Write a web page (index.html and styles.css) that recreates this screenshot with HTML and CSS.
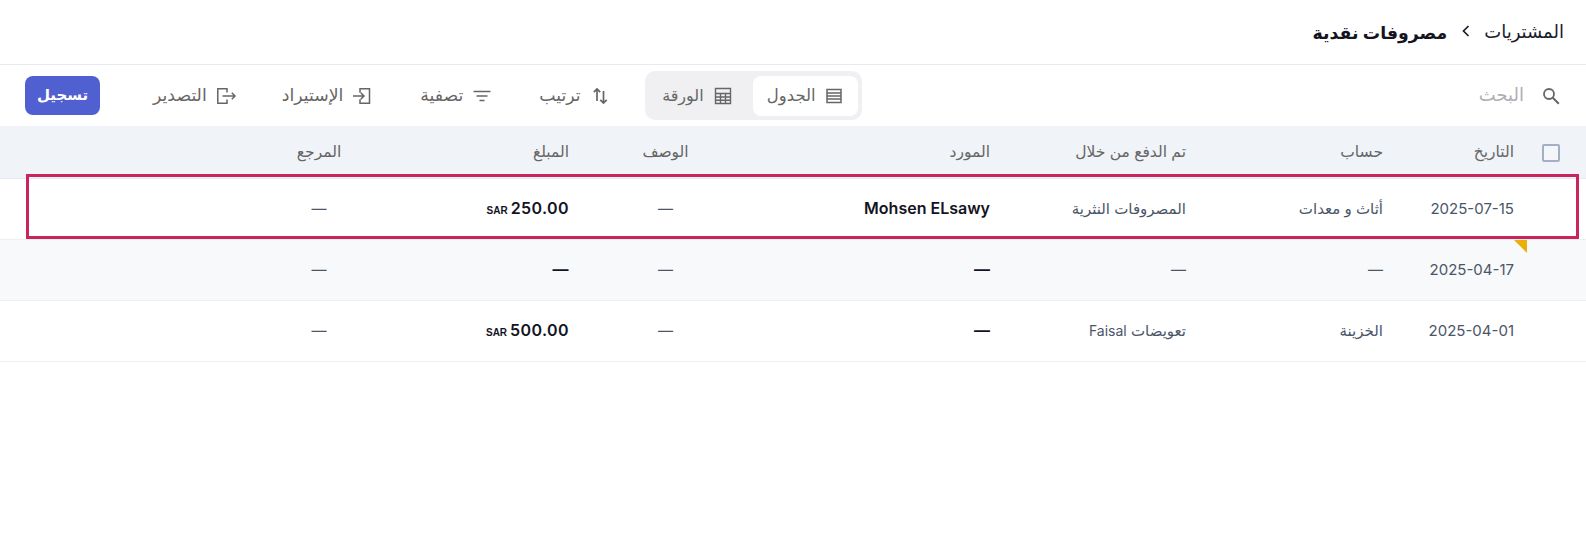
FILE: index.html
```html
<!DOCTYPE html>
<html lang="ar" dir="rtl">
<head>
<meta charset="utf-8">
<title>مصروفات نقدية</title>
<link rel="stylesheet" href="styles.css">
</head>
<body>
<header class="topbar">
  <span class="crumb">المشتريات</span>
  <svg class="chev" width="8" height="12" viewBox="0 0 8 12"><path d="M6.500 1 1.500 6l5 5" fill="none" stroke="#1b1b2b" stroke-width="1.700"/></svg>
  <h1 class="title">مصروفات نقدية</h1>
</header>
<section class="toolbar">
  <div class="search">
    <svg class="search-ic" width="18" height="18" viewBox="0 0 18 18"><circle cx="7" cy="7" r="5" fill="none" stroke="#666" stroke-width="1.800"/><path d="m10.800 10.800 6 6" stroke="#666" stroke-width="2" fill="none"/></svg>
    <span class="search-text">البحث</span>
  </div>
  <div class="actions">
    <div class="toggle">
      <button class="tab active">
        <svg width="20" height="20" viewBox="0 0 20 20"><path d="M3 3.500h14v13H3zM3 7h14M3 10h14M3 13h14" fill="none" stroke="#666" stroke-width="1.500"/></svg>
        <span>الجدول</span>
      </button>
      <button class="tab other">
        <svg width="20" height="20" viewBox="0 0 20 20"><path d="M2.500 2.500h15v15h-15zM2.500 7.500h15M2.500 11h15M2.500 14.300h15M7.500 7.500v10M12.500 7.500v10" fill="none" stroke="#666" stroke-width="1.400"/></svg>
        <span>الورقة</span>
      </button>
    </div>
    <button class="tool sort">
      <svg width="20" height="20" viewBox="0 0 20 20"><path d="M7 15V3M3.800 6.200 7 3l3.200 3.200M13.500 5v12M10.300 13.800l3.200 3.200 3.200-3.200" fill="none" stroke="#666" stroke-width="1.700"/></svg>
      <span>ترتيب</span>
    </button>
    <button class="tool filter">
      <svg width="20" height="20" viewBox="0 0 20 20"><path d="M1.500 5.500h17M4.500 10h11M7.500 14.500h5" fill="none" stroke="#666" stroke-width="1.600"/></svg>
      <span>تصفية</span>
    </button>
    <button class="tool import">
      <svg width="20" height="20" viewBox="0 0 20 20"><path d="M8 6.800v-4h9.500v14.400H8v-4M1 10h11M8.800 6.800 12 10l-3.200 3.200" fill="none" stroke="#666" stroke-width="1.500"/></svg>
      <span>الإستيراد</span>
    </button>
    <button class="tool export">
      <svg width="20" height="20" viewBox="0 0 20 20"><path d="M11 6.500V2.800H1.800v14.400H11v-3.700M6.500 10H19M15.800 6.800 19 10l-3.200 3.200" fill="none" stroke="#666" stroke-width="1.500"/></svg>
      <span>التصدير</span>
    </button>
    <button class="submit">تسجيل</button>
  </div>
</section>
<main class="table">
  <div class="row head">
    <div class="cell check"><span class="box"></span></div>
    <div class="cell">التاريخ</div>
    <div class="cell">حساب</div>
    <div class="cell">تم الدفع من خلال</div>
    <div class="cell">المورد</div>
    <div class="cell center">الوصف</div>
    <div class="cell">المبلغ</div>
    <div class="cell center">المرجع</div>
  </div>
  <div class="row">
    <div class="cell check"></div>
    <div class="cell">2025-07-15</div>
    <div class="cell">أثاث و معدات</div>
    <div class="cell">المصروفات النثرية</div>
    <div class="cell strong">Mohsen ELsawy</div>
    <div class="cell center">—</div>
    <div class="cell amount"><span dir="ltr"><small>SAR</small>250.00</span></div>
    <div class="cell center">—</div>
  </div>
  <div class="row alt">
    <div class="cell check flag"></div>
    <div class="cell">2025-04-17</div>
    <div class="cell">—</div>
    <div class="cell">—</div>
    <div class="cell strong">—</div>
    <div class="cell center">—</div>
    <div class="cell amount">—</div>
    <div class="cell center">—</div>
  </div>
  <div class="row">
    <div class="cell check"></div>
    <div class="cell">2025-04-01</div>
    <div class="cell">الخزينة</div>
    <div class="cell">تعويضات <span class="latin">Faisal</span></div>
    <div class="cell strong">—</div>
    <div class="cell center">—</div>
    <div class="cell amount"><span dir="ltr"><small>SAR</small>500.00</span></div>
    <div class="cell center">—</div>
  </div>
  <div class="highlight"></div>
</main>
</body>
</html>
```
FILE: styles.css
```css
* { box-sizing: border-box; }
html, body { margin: 0; padding: 0; }
body {
  background: #fff;
  font-family: Inter, "Noto Sans", "DejaVu Sans", sans-serif;
  font-size: 15px;
  color: #4a5568;
  height: 548px;
  overflow: hidden;
}
button { font: inherit; border: 0; background: none; padding: 0; color: inherit; }

.topbar {
  height: 65px;
  border-bottom: 1px solid #e6e9f0;
  display: flex;
  align-items: center;
  padding: 0 22px 2px 0;
}
.crumb { font-size: 18px; color: #1b1b2b; }
.chev { margin: 0 14px 0 15px; }
.title { margin: 2px 0 0; font-size: 17.300px; font-weight: 600; color: #14141f; }

.toolbar {
  height: 61px;
  display: flex;
  align-items: center;
  justify-content: space-between;
  padding: 0 26px 0 25px;
}
.search { display: flex; align-items: center; gap: 18px; }
.search-text { font-size: 18px; color: #aeaeb4; margin-top: -2px; }

.actions { display: flex; align-items: center; }
.toggle {
  display: flex;
  align-items: center;
  width: 217px;
  height: 49px;
  padding: 5px 4px 5px 5px;
  background: #f0f0f2;
  border-radius: 10px;
}
.tab, .tool {
  display: flex;
  align-items: center;
  gap: 9px;
  font-size: 17.300px;
  color: #666;
}
.tab span, .tool span { margin-top: -2px; }
.tab { height: 40px; padding: 0 14px; border-radius: 8px; font-size: 16.500px; gap: 8px; }
.tab.active { background: #fff; width: 105px; }
.tab.other { padding: 0 20px 0 0; gap: 9px; font-size: 16px; }
.sort { margin-right: 35px; }
.filter { margin-right: 47px; }
.import { margin-right: 48px; }
.export { margin-right: 46px; }
.submit {
  width: 75px;
  height: 39px;
  margin-right: 53px;
  padding-bottom: 2px;
  border-radius: 8px;
  background: #5160d0;
  color: #fff;
  font-size: 15px;
  font-weight: 600;
}

.table { position: relative; }
.row {
  display: grid;
  grid-template-columns: 72px 131px 197px 196px 228px 193px 200px 100px 1fr;
  height: 61px;
  padding-bottom: 2px;
  border-bottom: 1px solid #eceef2;
  align-items: center;
}
.row.head {
  height: 53px;
  background: #f0f3f8;
  border-bottom-color: #e6e9f0;
  color: #666;
  font-size: 15.500px;
}
.row.alt { background: #f8f9fb; }
.cell { min-width: 0; }
.center { text-align: center; }
.latin { font-size: 14px; }
.strong { font-weight: 600; font-size: 16px; color: #14141f; }
.amount { font-weight: 600; font-size: 16px; letter-spacing: .4px; color: #14141f; }
.amount small {
  margin-right: 3px;
  font-family: "Liberation Sans Narrow", "Liberation Sans", sans-serif;
  font-size: 10px;
  font-weight: 700;
  letter-spacing: 0;
}
.check { align-self: stretch; display: flex; align-items: center; padding-right: 26px; position: relative; }
.head .check { margin-bottom: -3px; }
.box { width: 18px; height: 18px; border: 2px solid #a3afc2; border-radius: 2px; background: #f4f6fa; }
.flag::before {
  content: "";
  position: absolute;
  top: 0;
  left: 0;
  width: 13px;
  height: 13px;
  background: #e8b008;
  clip-path: polygon(0 0, 100% 0, 100% 100%);
}
.highlight {
  position: absolute;
  top: 48px;
  left: 26px;
  right: 7px;
  height: 65px;
  border: 3px solid #c9245b;
  pointer-events: none;
}
```
